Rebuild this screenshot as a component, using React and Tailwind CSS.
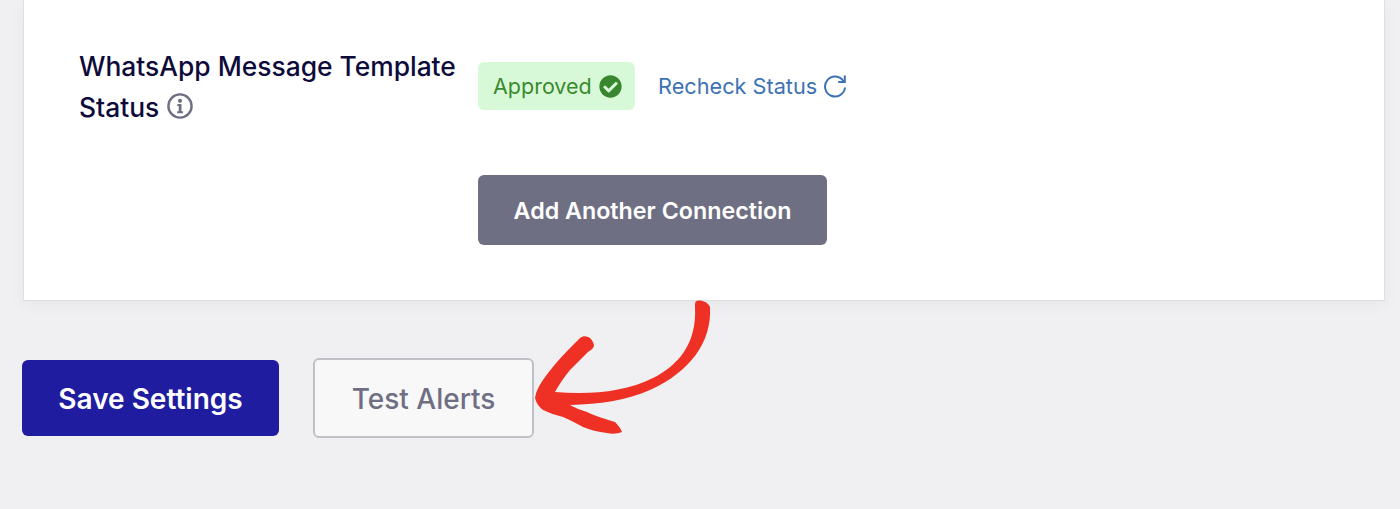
import { FaCheckCircle } from "react-icons/fa";

const InfoIcon = () => (
	<svg className="w-[26px] h-[26px] ml-[8px] inline-block align-[-2px]" viewBox="0 0 26 26" fill="none">
		<circle cx="13" cy="13" r="11.600" stroke="#6f6f84" strokeWidth="2.400" />
		<circle cx="13" cy="7.800" r="2.100" fill="#6f6f84" />
		<path d="M10.300 11h4.200v7.200h1.500v2h-5.800v-2h1.500v-5.200h-1.400z" fill="#6f6f84" />
	</svg>
);

const RecheckIcon = () => (
	<svg className="w-[24px] h-[24px]" viewBox="0 0 24 24" fill="none" stroke="#3d72b4" strokeWidth="2">
		<path d="M20.500 7.200A10 10 0 1 0 22 13.500" />
		<path d="M21.800 1.500v6.600h-6.600" />
	</svg>
);

const Arrow = () => (
	<svg className="absolute left-0 top-0 w-[1400px] h-[509px] pointer-events-none" viewBox="0 0 1400 509">
		<path
			fill="#ee3124"
			d="M695 307C695 303 695 301 698 300.500C702 300 708 302 710 307C712 342 690 372 650 390C625 401 600 404 570 405C575 408 581 410 587 412C597 417 606 419 615 422C618 425 621 429 622 432C617 434 612 434 607 433C598 432 590 430 583 427C576 423 570 420 563 417C556 415 549 413 543 410C539 407 536 403 535 398C536 391 539 386 543 380C547 374 552 368 557 362C564 354 572 346 580 338C583 336 585 336 588 337C591 338 593 341 594 345C594 348 591 350 588 352C582 358 576 364 570 370C564 377 559 385 555 392C590 395 625 392 653 378C677 366 697 345 695 307Z"
		/>
	</svg>
);

const App = () => {
	return (
		<div className="relative w-full h-[509px] overflow-hidden bg-[#f0f0f2] font-['Inter',sans-serif]">
			<div className="ml-[23px] w-[1362px] h-[301px] pt-[46px] pl-[55px] bg-white border-b border-x border-[#dfdfe3] shadow-[0_4px_16px_rgba(0,0,0,0.04)]">
				<div className="flex">
					<h3 className="w-[399px] h-[83px] text-[26.400px] leading-[41px] font-medium text-[#0e0b3b]">
						WhatsApp Message Template
						<br />
						Status
						<InfoIcon />
					</h3>
					<div className="flex items-center h-[48px] mt-[16px]">
						<span className="flex items-center gap-[7px] h-[48px] w-[157px] pl-[15px] rounded-[6px] bg-[#d8f9d8] text-[21.500px] text-[#3a8a2e]">
							Approved
							<FaCheckCircle className="text-[#38862e] w-[23px] h-[23px]" />
						</span>
						<a className="flex items-center gap-[6px] ml-[23px] text-[21.700px] text-[#3d72b4]">
							Recheck Status
							<RecheckIcon />
						</a>
					</div>
				</div>
				<div className="ml-[399px] mt-[46px]">
					<button className="w-[349px] h-[70px] pt-[2px] rounded-[6px] bg-[#6f6f84] text-[23.250px] font-semibold text-white">Add Another Connection</button>
				</div>
			</div>
			<div className="flex items-center gap-[34px] ml-[22px] mt-[57px]">
				<button className="w-[257px] h-[76px] pt-[2px] rounded-[6px] bg-[#201ca0] text-[28px] font-semibold text-white">Save Settings</button>
				<button className="w-[221px] h-[80px] pt-[2px] rounded-[6px] bg-[#f8f8f9] border-2 border-[#c0c0c8] text-[28px] font-medium text-[#6f6f84]">Test Alerts</button>
			</div>
			<Arrow />
		</div>
	);
};

export default App;
